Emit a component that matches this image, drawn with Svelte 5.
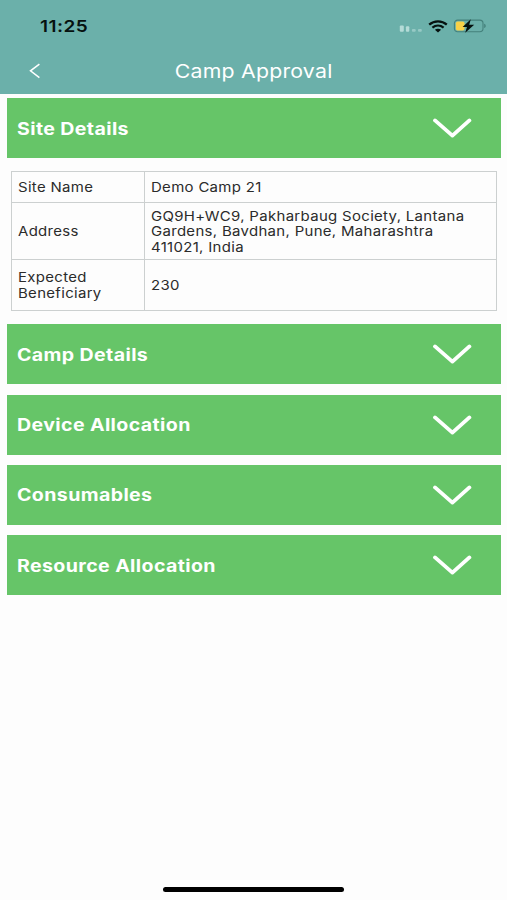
<script>
  const site = [
    { label: ["Site Name"], value: ["Demo Camp 21"], height: 31 },
    {
      label: ["Address"],
      value: [
        "GQ9H+WC9, Pakharbaug Society, Lantana",
        "Gardens, Bavdhan, Pune, Maharashtra",
        "411021, India",
      ],
      height: 57,
    },
    { label: ["Expected", "Beneficiary"], value: ["230"], height: 51 },
  ];

  const sections = [
    { id: "site", title: "Site Details" },
    { id: "camp", title: "Camp Details" },
    { id: "device", title: "Device Allocation" },
    { id: "consumables", title: "Consumables" },
    { id: "resource", title: "Resource Allocation" },
  ];

  let open = $state("site");
  const toggle = (id) => (open = open === id ? "" : id);
</script>

{#snippet lines(list)}
  {#each list as line}
    <span class="line">{line}</span>
  {/each}
{/snippet}

<div class="screen">
  <header>
    <div class="status">
      <span class="time">11:25</span>
      <div class="indicators">
        <svg class="signal" width="24" height="8" viewBox="0 0 24 8" fill="#b4dbd7">
          <rect x="0.8" y="0.4" width="4" height="6.4" rx="1" />
          <rect x="6.9" y="1.2" width="3.4" height="5.6" rx="1" />
          <g opacity="0.6">
            <rect x="12.9" y="4" width="3.8" height="2.8" rx="1" />
            <rect x="19" y="4" width="3.8" height="2.8" rx="1" />
          </g>
        </svg>
        <svg class="wifi" width="20" height="13" viewBox="0 0 20 13" fill="none" stroke="#06110f">
          <path d="M1.2 4.7C6.2 0.3 13.8 0.3 18.8 4.7" stroke-width="2.3" />
          <path d="M4.4 7.7C7.7 4.9 12.3 4.9 15.6 7.7" stroke-width="2.2" />
          <path d="M10 12.4L6.9 9.8C8.7 8.3 11.3 8.3 13.1 9.8Z" fill="#06110f" stroke="none" />
        </svg>
        <svg class="battery" width="33" height="14" viewBox="0 0 33 14">
          <rect x="1.4" y="1.1" width="28.6" height="11.6" rx="3.2" fill="none" stroke="#44807b" stroke-width="1.1" />
          <path d="M31.2 4.8C33.2 5.4 33.2 8.4 31.2 9Z" fill="#44807b" />
          <rect x="2.9" y="2.6" width="8.6" height="8.8" rx="1.6" fill="#f8d147" />
          <path d="M17.8 0.2L9.6 8H14L12.2 13.8L21.2 5.7H16.2Z" fill="#06110f" />
        </svg>
      </div>
    </div>
    <div class="nav">
      <button class="back" aria-label="Back">
        <svg width="12" height="16" viewBox="0 0 12 16" fill="none" stroke="#fff" stroke-width="1.5">
          <path d="M10.4 1.2L1.5 7.8L10.4 14.6" />
        </svg>
      </button>
      <h1>Camp Approval</h1>
    </div>
  </header>

  <main>
    {#each sections as section (section.id)}
      <section>
        <button class="bar" onclick={() => toggle(section.id)}>
          <span class="title">{section.title}</span>
          <svg width="40" height="22" viewBox="0 0 40 22" fill="none" stroke="#fff" stroke-width="3.8" stroke-linecap="round" stroke-linejoin="round">
            <path d="M3 3.4L20.4 18.6L37.4 3.4" />
          </svg>
        </button>
        {#if section.id === "site" && open === "site"}
          <table>
            <tbody>
              {#each site as row}
                <tr style="height:{row.height}px">
                  <th>{@render lines(row.label)}</th>
                  <td>{@render lines(row.value)}</td>
                </tr>
              {/each}
            </tbody>
          </table>
        {/if}
      </section>
    {/each}
  </main>

  <div class="home"></div>
</div>

<style>
  :global(body) {
    background: #fdfdfd;
  }
  .screen {
    display: flex;
    flex-direction: column;
    box-sizing: border-box;
    height: 900px;
    padding-bottom: 8px;
    overflow: hidden;
    font-family: Inter, "Liberation Sans", sans-serif;
    background: #fdfdfd;
  }
  button {
    padding: 0;
    border: 0;
    font: inherit;
    color: inherit;
    cursor: pointer;
  }
  svg {
    display: block;
  }
  header {
    height: 93.5px;
    background: #6bb0aa;
  }
  .status {
    display: flex;
    align-items: center;
    justify-content: space-between;
    height: 52px;
    padding: 0 21px 0 40px;
  }
  /* The type is wider than the family's normal cut. */
  .time,
  h1,
  .title,
  .line {
    display: block;
    width: max-content;
    white-space: nowrap;
    letter-spacing: 0.28px;
    transform: scaleX(1.15);
    transform-origin: left center;
  }
  .time {
    font-size: 16.5px;
    font-weight: 600;
    letter-spacing: 0.4px;
    color: #06110f;
  }
  .indicators {
    display: flex;
    align-items: center;
  }
  .signal {
    margin: 5px 5px 0 0;
  }
  .wifi {
    margin-right: 5px;
  }
  .nav {
    display: grid;
    grid-template-columns: 60px 1fr 60px;
    align-items: center;
    height: 38px;
  }
  .back {
    justify-self: start;
    margin-left: 29px;
    background: none;
  }
  h1 {
    margin: 0;
    justify-self: center;
    transform-origin: center;
    font-size: 18.5px;
    font-weight: 400;
    letter-spacing: 0.2px;
    color: #fff;
  }
  main {
    display: flex;
    flex: 1;
    flex-direction: column;
    gap: 10.2px;
    padding: 4.8px 6px 0 7px;
  }
  .bar {
    display: flex;
    align-items: center;
    justify-content: space-between;
    width: 100%;
    height: 60px;
    padding: 0 29px 0 10px;
    color: #fff;
    background: #66c568;
  }
  .title {
    padding-top: 1px;
    font-size: 17px;
    font-weight: 700;
    letter-spacing: 0.34px;
  }
  table {
    width: 486px;
    margin: 13px 4px 3px;
    border-collapse: collapse;
    table-layout: fixed;
    font-size: 13px;
    line-height: 15.5px;
    color: #2b2b2b;
  }
  th,
  td {
    padding: 1px 6px 0;
    border: 1px solid #ccd0d0;
    font-weight: 400;
    text-align: left;
    vertical-align: middle;
  }
  th {
    width: 120px;
  }
  .home {
    align-self: center;
    width: 181px;
    height: 5px;
    border-radius: 3px;
    background: #000;
  }
</style>
